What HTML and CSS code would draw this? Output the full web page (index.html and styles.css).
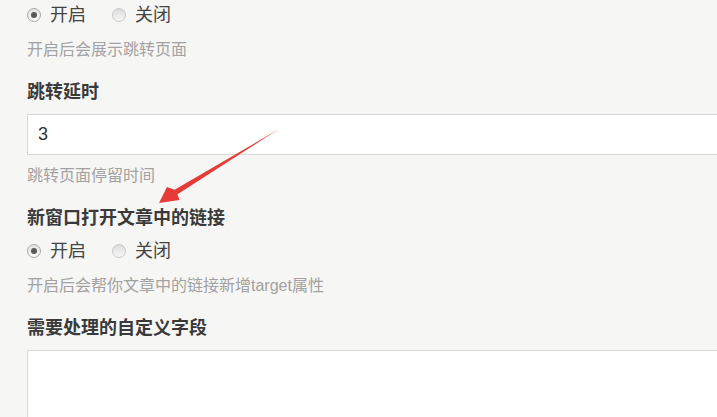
FILE: index.html
```html
<!DOCTYPE html>
<html>
<head>
  <link rel="stylesheet" href="styles.css">
</head>
<body>
  <div class="settings">
    <div class="radio-group">
      <label class="radio checked"><span class="dot"></span>开启</label>
      <label class="radio"><span class="dot"></span>关闭</label>
    </div>
    <p class="hint hint-after-radio">开启后会展示跳转页面</p>

    <h3 class="field-title">跳转延时</h3>
    <input class="text-input" type="text" value="3">
    <p class="hint">跳转页面停留时间</p>

    <h3 class="field-title">新窗口打开文章中的链接</h3>
    <div class="radio-group radio-after-title">
      <label class="radio checked"><span class="dot"></span>开启</label>
      <label class="radio"><span class="dot"></span>关闭</label>
    </div>
    <p class="hint hint-after-radio">开启后会帮你文章中的链接新增target属性</p>

    <h3 class="field-title">需要处理的自定义字段</h3>
    <textarea class="text-area"></textarea>
  </div>

  <!-- Red annotation arrow drawn over the form -->
  <svg class="arrow" width="717" height="417" viewBox="0 0 717 417">
    <polygon points="279,129 177.5,194.3 179.5,200 159,203 167,187 174.5,189.8" fill="#e63b37"/>
  </svg>
</body>
</html>
```

FILE: styles.css
```css
body {
  margin: 0;
  background-color: #f6f6f4;
  font-family: 'Liberation Sans', 'Noto Sans CJK SC', sans-serif;
  overflow: hidden;
  height: 417px;
  position: relative;
}

.settings {
  padding-left: 27px;
}

/* radio rows */
.radio-group {
  display: flex;
  align-items: center;
  gap: 26px;
  height: 30px;
}

.radio-after-title {
  margin-top: 5px;
}

.radio {
  display: flex;
  align-items: center;
  gap: 9px;
  font-size: 18px;
  line-height: 30px;
  color: #444;
}

.radio .dot {
  position: relative;
  width: 12px;
  height: 12px;
  border-radius: 50%;
  border: 1px solid #c9c9c9;
  background: linear-gradient(#dcdcdc, #f7f7f7);
}

.radio.checked .dot {
  border-color: #a9a9a9;
  background: linear-gradient(#e2e2e2, #fafafa);
}

.radio.checked .dot::after {
  content: '';
  position: absolute;
  left: 3px;
  top: 3px;
  width: 6px;
  height: 6px;
  border-radius: 50%;
  background: #5a5a5a;
}

/* hints and titles */
.hint {
  margin: 9px 0 0;
  font-size: 16px;
  line-height: 24px;
  color: #a2a2a2;
}

.hint-after-radio {
  margin-top: 8px;
}

.field-title {
  margin: 17px 0 0;
  font-size: 18px;
  line-height: 26px;
  font-weight: bold;
  color: #3a3a3a;
}

/* inputs */
.text-input,
.text-area {
  display: block;
  box-sizing: border-box;
  width: 720px;
  margin-top: 9px;
  background: #fff;
  border: 1px solid #d8d8d6;
  font-family: 'Liberation Sans', 'Noto Sans CJK SC', sans-serif;
  font-size: 18px;
  color: #333;
  outline: none;
}

.text-input {
  height: 41px;
  padding: 0 10px;
}

.text-area {
  height: 100px;
  resize: none;
}

.arrow {
  position: absolute;
  left: 0;
  top: 0;
  pointer-events: none;
}
```
